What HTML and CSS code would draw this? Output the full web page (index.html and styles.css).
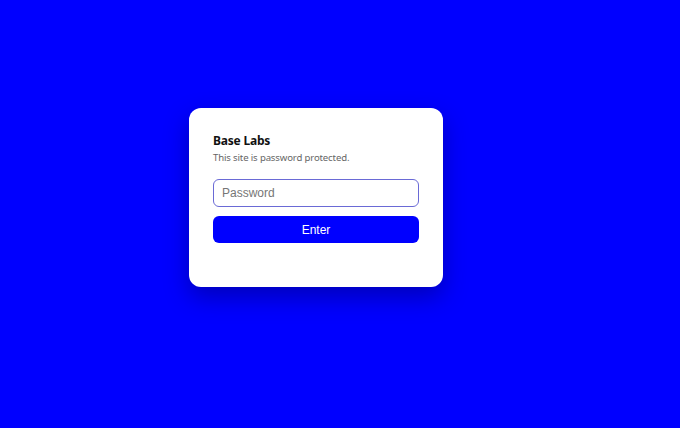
FILE: index.html
```html
<!DOCTYPE html>
<html>
<head>
<meta charset="utf-8">
<link rel="stylesheet" href="styles.css">
</head>
<body>
<div class="page">
  <div class="card">
    <h1 class="title">Base Labs</h1>
    <p class="subtitle">This site is password protected.</p>
    <form class="form">
      <input class="input" type="password" placeholder="Password" autofocus>
      <button class="button" type="button">Enter</button>
    </form>
  </div>
</div>
</body>
</html>
```

FILE: styles.css
```css
html, body {
  margin: 0;
  padding: 0;
  background: #0000ff;
}
.page {
  box-sizing: border-box;
  min-height: 100vh;
  display: flex;
  align-items: center;
  justify-content: center;
  padding: 0 48px 33px 0;
}
.card {
  box-sizing: border-box;
  width: 254px;
  height: 179px;
  background: #ffffff;
  border-radius: 12px;
  padding: 25px 24px 24px;
  box-shadow: 0 10px 25px rgba(0, 0, 60, 0.35);
}
.title {
  margin: 0;
  font-family: "Noto Sans", "Open Sans", sans-serif;
  font-size: 12px;
  font-weight: 700;
  letter-spacing: -0.2px;
  line-height: 16px;
  color: #111;
}
.subtitle {
  margin: 2px 0 0;
  font-family: "Noto Sans", "Open Sans", sans-serif;
  font-size: 9.6px;
  letter-spacing: -0.15px;
  line-height: 14px;
  color: #666;
}
.form {
  margin-top: 14px;
  display: flex;
  flex-direction: column;
  gap: 9px;
}
.input {
  box-sizing: border-box;
  width: 100%;
  height: 28px;
  margin: 0;
  padding: 0 8px;
  border: 1px solid #6a6ad6;
  border-radius: 6px;
  font-family: "Liberation Sans", Arial, sans-serif;
  font-size: 12px;
  color: #222;
  background: #fff;
  outline: none;
}
.input::placeholder {
  color: #767676;
}
.button {
  box-sizing: border-box;
  width: 100%;
  height: 27px;
  margin: 0;
  border: none;
  border-radius: 6px;
  background: #0000ff;
  color: #fff;
  font-family: "Liberation Sans", Arial, sans-serif;
  font-size: 12px;
  cursor: pointer;
}
```
